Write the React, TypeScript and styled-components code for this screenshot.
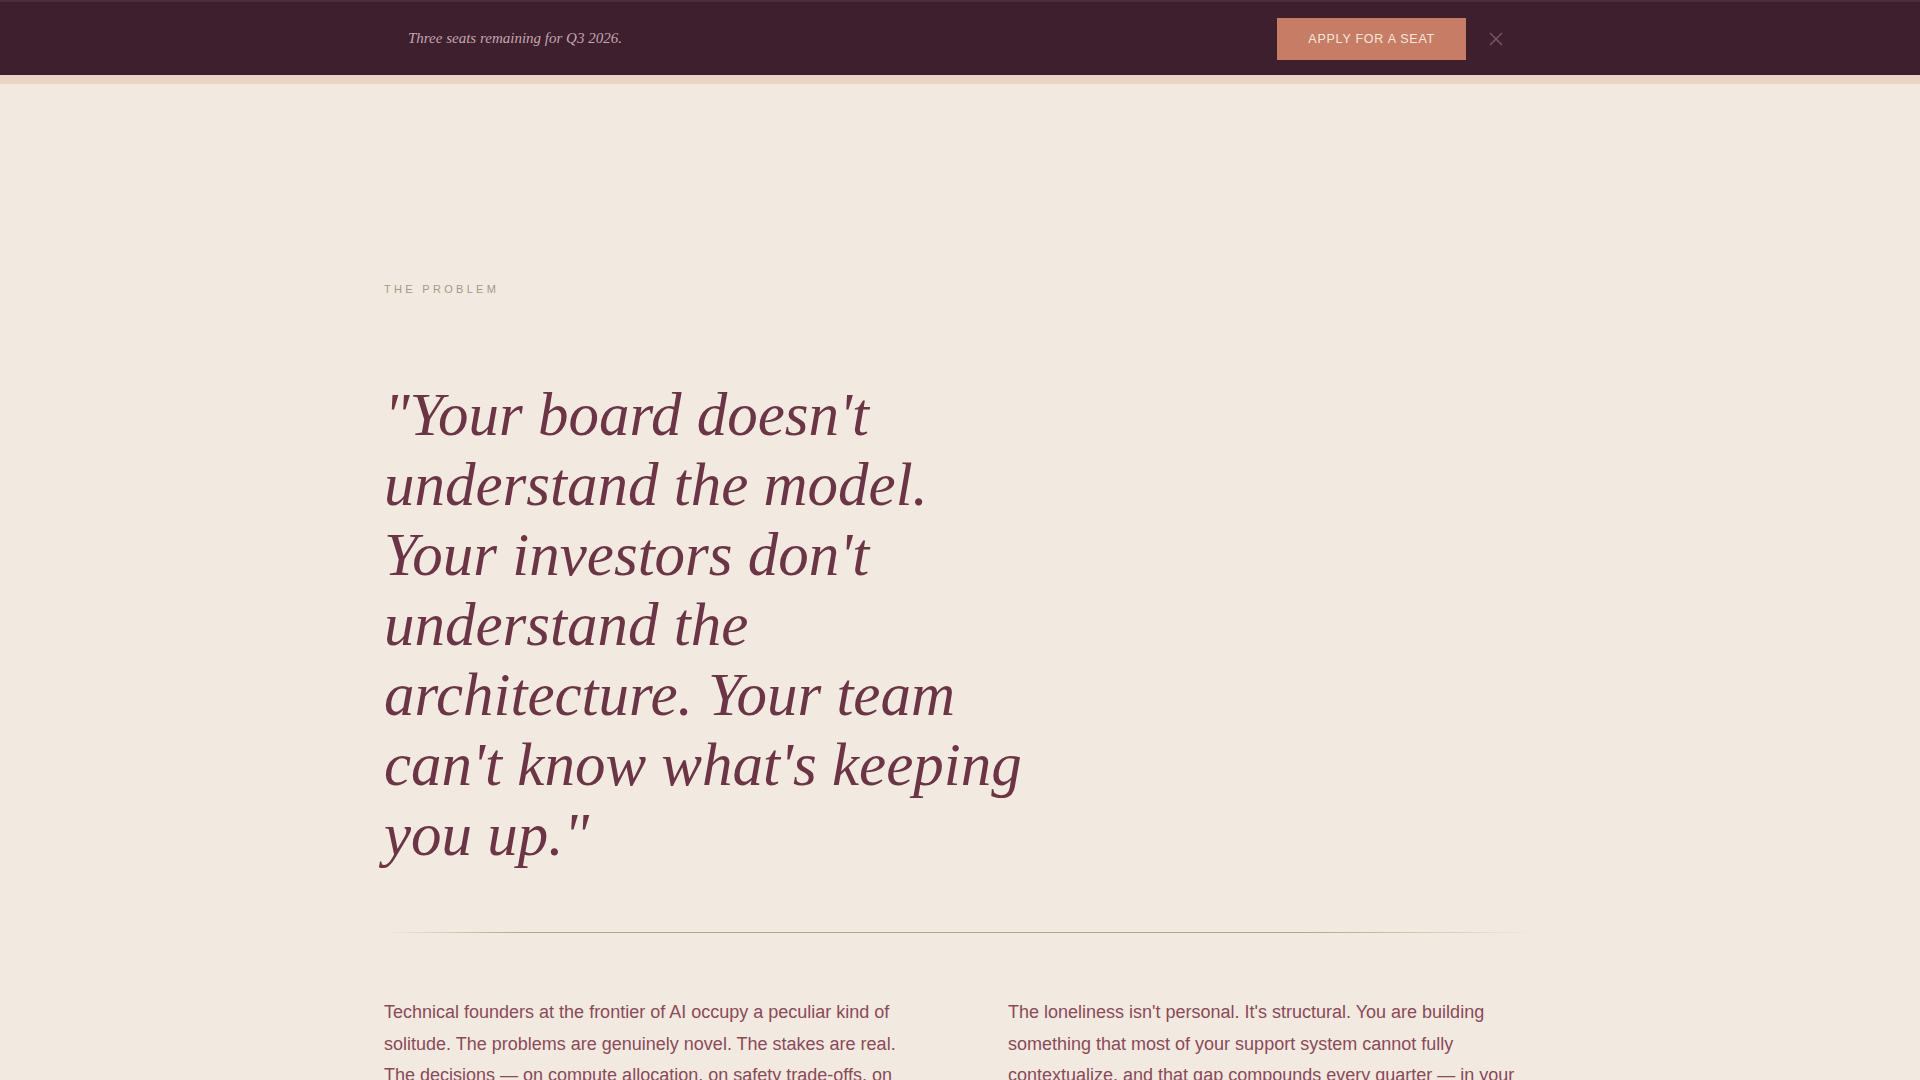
import styled, { createGlobalStyle } from 'styled-components'

const colors = {
    plum: '#3d1f2e',
    plumLine: '#4b2c3b',
    band: '#e8d5c4',
    page: '#f2e9e1',
    accent: '#c77c66',
    quote: '#6b3546',
    body: '#8a4a58',
    eyebrow: '#a39a86',
    rule: '#b3a88c',
}

const GlobalStyle = createGlobalStyle`
    html, body {
        margin: 0;
        padding: 0;
        background: ${colors.page};
    }
    * {
        box-sizing: border-box;
    }
`

const Page = styled.div`
    min-height: 100vh;
    background: ${colors.page};
    overflow: hidden;
`

const Banner = styled.div`
    height: 75px;
    background: ${colors.plum};
    border-top: 2px solid ${colors.plumLine};
`

const BannerInner = styled.div`
    max-width: 1152px;
    height: 100%;
    margin: 0 auto;
    padding: 0 24px;
    display: flex;
    align-items: center;
`

const BannerText = styled.p`
    margin: 0;
    flex: 1;
    font-family: "Liberation Serif", "Times New Roman", serif;
    font-style: italic;
    font-size: 15px;
    color: #c4a6ae;
`

const SeatButton = styled.button`
    height: 42px;
    padding: 0 31px;
    border: 0;
    background: ${colors.accent};
    color: #f6e6dc;
    font-family: "Liberation Sans", Arial, sans-serif;
    font-size: 12.5px;
    letter-spacing: 0.06em;
    text-transform: uppercase;
    cursor: pointer;
`

const CloseButton = styled.button`
    width: 32px;
    height: 32px;
    margin-left: 14px;
    border: 0;
    padding: 0;
    background: none;
    display: flex;
    align-items: center;
    justify-content: center;
    color: #7f5a6b;
    cursor: pointer;
`

const Band = styled.div`
    height: 9px;
    background: ${colors.band};
`

const Section = styled.section`
    max-width: 1152px;
    margin: 0 auto;
    padding-top: 199px;
`

const Eyebrow = styled.div`
    font-family: "Liberation Sans", Arial, sans-serif;
    font-size: 11px;
    letter-spacing: 0.3em;
    color: ${colors.eyebrow};
    text-transform: uppercase;
`

const Quote = styled.blockquote`
    margin: 85px 0 0;
    max-width: 655px;
    font-family: "Liberation Serif", "Times New Roman", serif;
    font-style: italic;
    font-size: 61px;
    line-height: 70px;
    color: ${colors.quote};
`

const Rule = styled.hr`
    margin: 62px 0 0;
    height: 1px;
    border: 0;
    background: linear-gradient(90deg, transparent 0%, ${colors.rule} 12%, ${colors.rule} 80%, transparent 100%);
`

const Columns = styled.div`
    display: grid;
    grid-template-columns: 1fr 1fr;
    column-gap: 96px;
    margin-top: 64px;
`

const Paragraph = styled.p`
    margin: 0;
    font-family: "Liberation Sans", Arial, sans-serif;
    font-size: 18px;
    line-height: 31.5px;
    color: ${colors.body};
`

const App = () => {
    return (
        <>
            <GlobalStyle />
            <Page>
                <Banner>
                    <BannerInner>
                        <BannerText>Three seats remaining for Q3 2026.</BannerText>
                        <SeatButton>Apply for a seat</SeatButton>
                        <CloseButton aria-label="Dismiss">
                            <svg width="14" height="14" viewBox="0 0 14 14" fill="none" stroke="currentColor" strokeWidth="1.3">
                                <path d="M1 1 L13 13 M13 1 L1 13" />
                            </svg>
                        </CloseButton>
                    </BannerInner>
                </Banner>
                <Band />
                <Section>
                    <Eyebrow>The Problem</Eyebrow>
                    <Quote>
                        "Your board doesn't understand the model. Your investors don't understand the architecture. Your team can't know what's keeping you up."
                    </Quote>
                    <Rule />
                    <Columns>
                        <Paragraph>
                            Technical founders at the frontier of AI occupy a peculiar kind of solitude. The problems are genuinely novel. The stakes are real. The decisions — on compute allocation, on safety trade-offs, on hiring against the clock — rarely have precedent.
                        </Paragraph>
                        <Paragraph>
                            The loneliness isn't personal. It's structural. You are building something that most of your support system cannot fully contextualize, and that gap compounds every quarter — in your judgment, your energy, and your company.
                        </Paragraph>
                    </Columns>
                </Section>
            </Page>
        </>
    )
}

export default App
